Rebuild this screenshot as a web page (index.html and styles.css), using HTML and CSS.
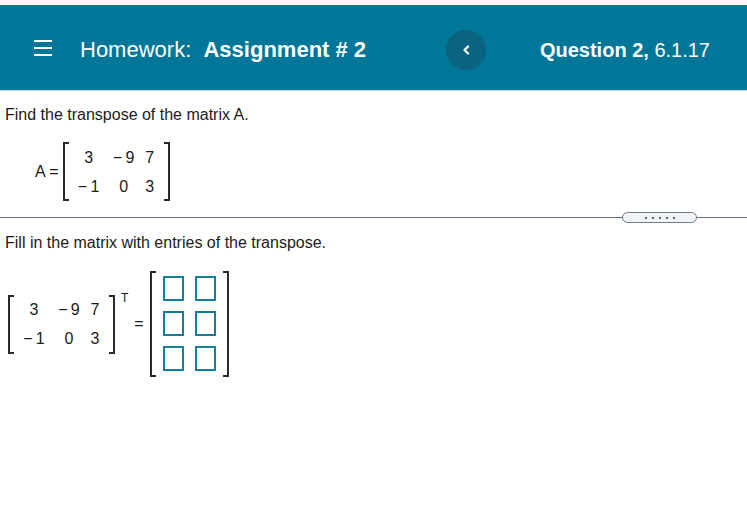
FILE: index.html
```html
<!DOCTYPE html>
<html lang="en">
<head>
<meta charset="utf-8">
<title>Homework: Assignment # 2</title>
<link rel="stylesheet" href="styles.css">
</head>
<body>
<header class="topbar">
  <div class="topbar-left">
    <span class="hamburger" aria-label="Menu"><i></i><i></i><i></i></span>
    <h1 class="title">Homework:&nbsp; <b>Assignment # 2</b></h1>
  </div>
  <div class="topbar-right">
    <button class="back-btn" aria-label="Previous question">
      <svg width="8" height="10" viewBox="0 0 8 10"><polyline points="6,1.5 2.5,5 6,8.5" fill="none" stroke="#ffffff" stroke-width="2.2" stroke-linecap="round" stroke-linejoin="round"/></svg>
    </button>
    <div class="qname"><b>Question 2,</b> 6.1.17</div>
  </div>
</header>

<main class="content">
  <section class="part part-one">
    <p class="prompt">Find the transpose of the matrix A.</p>
    <div class="eq eq-a">
      <span class="label">A =</span>
      <div class="matrix">
        <span class="bracket bracket-l"></span>
        <div class="cells">
          <span>3</span><span>−&#8201;9</span><span>7</span>
          <span>−&#8201;1</span><span>0</span><span>3</span>
        </div>
        <span class="bracket bracket-r"></span>
      </div>
    </div>
  </section>

  <div class="divider"><button class="pill" aria-label="More"><i></i><i></i><i></i><i></i><i></i></button></div>

  <section class="part part-two">
    <p class="prompt">Fill in the matrix with entries of the transpose.</p>
    <div class="eq eq-t">
      <div class="transposed">
        <div class="matrix">
          <span class="bracket bracket-l"></span>
          <div class="cells">
            <span>3</span><span>−&#8201;9</span><span>7</span>
            <span>−&#8201;1</span><span>0</span><span>3</span>
          </div>
          <span class="bracket bracket-r"></span>
        </div>
        <sup class="sup-t">T</sup>
      </div>
      <span class="equals">=</span>
      <div class="matrix answer">
        <span class="bracket bracket-l"></span>
        <div class="boxes">
          <input class="box" type="text" aria-label="row 1 col 1">
          <input class="box" type="text" aria-label="row 1 col 2">
          <input class="box" type="text" aria-label="row 2 col 1">
          <input class="box" type="text" aria-label="row 2 col 2">
          <input class="box" type="text" aria-label="row 3 col 1">
          <input class="box" type="text" aria-label="row 3 col 2">
        </div>
        <span class="bracket bracket-r"></span>
      </div>
    </div>
  </section>
</main>
</body>
</html>
```

FILE: styles.css
```css
* { box-sizing: border-box; }

html, body {
  margin: 0;
  padding: 0;
  background: #ffffff;
}

body {
  font-family: "Liberation Sans", Arial, sans-serif;
  color: #1b1b1b;
  font-size: 16px;
}

/* ---------- header ---------- */
.topbar {
  margin-top: 5px;
  height: 86px;
  padding: 4px 37px 0 34px;
  background: #007698;
  border-bottom: 1px solid #c9dde5;
  display: flex;
  align-items: center;
  color: #ffffff;
}

.topbar-left {
  display: flex;
  align-items: center;
}

.hamburger {
  width: 18px;
  display: flex;
  flex-direction: column;
  gap: 5px;
  margin-right: 28px;
  margin-bottom: 3px;
}

.hamburger i {
  display: block;
  height: 2px;
  background: #ffffff;
}

.title {
  margin: 0;
  font-size: 22px;
  font-weight: normal;
  line-height: 26px;
  white-space: nowrap;
}

.title b { font-weight: bold; }

.topbar-right {
  margin-left: auto;
  display: flex;
  align-items: center;
}

.back-btn {
  width: 40px;
  height: 40px;
  border-radius: 50%;
  border: none;
  padding: 0;
  background: #0a6381;
  display: flex;
  align-items: center;
  justify-content: center;
  margin-right: 54px;
}

.qname {
  font-size: 20px;
  line-height: 24px;
  white-space: nowrap;
}

/* ---------- content ---------- */
.content { padding: 0; }

.part { padding: 0 5px; }

.prompt {
  margin: 0;
  font-size: 16px;
  line-height: 18px;
}

.part-one .prompt { margin-top: 15px; }

.eq {
  display: flex;
  align-items: center;
}

.eq-a {
  margin-top: 18px;
  padding-left: 30px;
}

.label {
  font-size: 16px;
  margin-right: 4px;
  white-space: nowrap;
}

.matrix {
  display: flex;
  align-items: stretch;
  height: 59px;
}

.bracket {
  width: 6px;
  border: 2px solid #2a2a2a;
}

.bracket-l { border-right: none; }
.bracket-r { border-left: none; }

.cells {
  display: grid;
  grid-template-columns: 40px 30px 22px;
  grid-template-rows: 29px 29px;
  align-items: center;
  justify-items: center;
  padding-right: 3px;
  padding-top: 1px;
  font-size: 16px;
  line-height: 18px;
  white-space: nowrap;
}

/* divider */
.divider {
  margin-top: 11px;
  height: 11px;
  display: flex;
  justify-content: flex-end;
  padding-right: 50px;
  background: linear-gradient(#5f6e7a, #5f6e7a) no-repeat 0 5px / 100% 1px;
}

.pill {
  width: 75px;
  height: 11px;
  padding: 0;
  border: 1px solid #6e7b86;
  border-radius: 6px;
  background: #f1f3f5;
  display: flex;
  align-items: center;
  justify-content: center;
  gap: 5px;
}

.pill i {
  display: block;
  width: 2px;
  height: 2px;
  background: #5b6670;
}

.part-two .prompt { margin-top: 11px; }

.eq-t {
  margin-top: 19px;
  padding-left: 3px;
}

.transposed {
  display: flex;
  align-items: flex-start;
}

.sup-t {
  font-size: 12px;
  line-height: 12px;
  margin: -3px 0 0 6px;
  vertical-align: baseline;
}

.equals {
  margin: 0 6px 0 6px;
  font-size: 16px;
}

.answer { height: 106px; }

.boxes {
  display: grid;
  grid-template-columns: 21px 21px;
  grid-template-rows: 25px 25px 25px;
  column-gap: 11px;
  row-gap: 10px;
  padding: 5px 7px 0 7px;
}

.box {
  width: 21px;
  height: 25px;
  margin: 0;
  padding: 0;
  border: 2px solid #0e7f9c;
  border-radius: 0;
  background: #ffffff;
}
```
